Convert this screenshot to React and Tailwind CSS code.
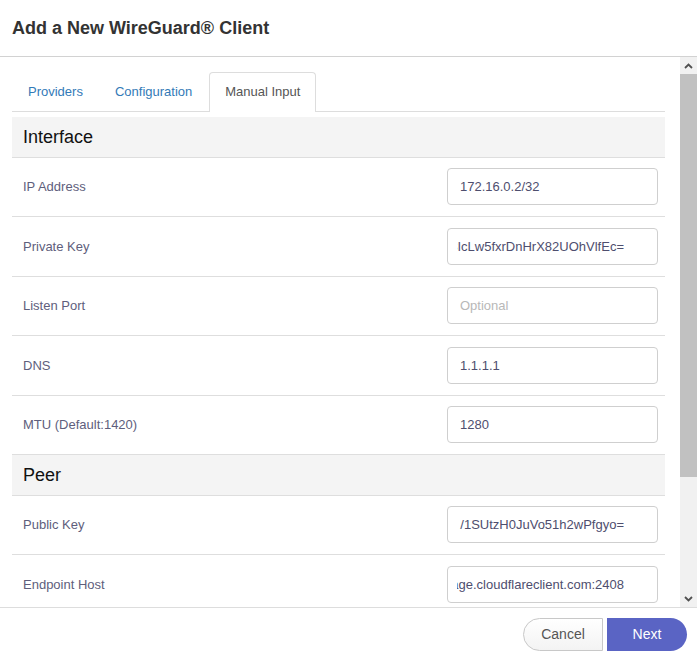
import React from "react";

const interfaceRows = [
  { label: "IP Address", value: "172.16.0.2/32" },
  { label: "Private Key", value: "kF2m9qT4vB7xN1pR8sW3IcLw5fxrDnHrX82UOhVlfEc=", tail: true },
  { label: "Listen Port", placeholder: "Optional" },
  { label: "DNS", value: "1.1.1.1" },
  { label: "MTU (Default:1420)", value: "1280" },
];

const peerRows = [
  { label: "Public Key", value: "/1SUtzH0JuVo51h2wPfgyo=", tail: true },
  { label: "Endpoint Host", value: "engage.cloudflareclient.com:2408", tail: true },
];

function Field({ value, placeholder, tail }) {
  return (
    <div
      className={`w-[211px] h-[37px] mr-[7px] border border-[#cfcfcf] rounded-[4px] bg-white flex items-center pr-[33px] ${
        tail ? "pl-[9px]" : "pl-3"
      }`}
    >
      <div
        className={`flex-1 overflow-hidden whitespace-nowrap flex ${tail ? "justify-end" : "justify-start"} text-[13px] ${
          value ? "text-[#4e4e6e]" : "text-[#b8b8b8]"
        }`}
      >
        <span className="shrink-0">{value || placeholder}</span>
      </div>
    </div>
  );
}

function Row({ label, ...rest }) {
  return (
    <div className="h-[59.5px] border-b border-[#dedede] flex items-center">
      <div className="flex-1 pl-[11px] text-[13px] text-[#5e5e7c]">{label}</div>
      <Field {...rest} />
    </div>
  );
}

function SectionHead({ title }) {
  return (
    <div className="h-[40.5px] bg-[#f4f4f4] border-b border-[#dedede] flex items-center pl-[11px] pt-px text-[18px] text-[#111]">
      {title}
    </div>
  );
}

function Chevron({ up }) {
  return (
    <svg width="9" height="6" viewBox="0 0 9 6" className={up ? "" : "rotate-180"}>
      <path d="M1 5 L4.5 1.5 L8 5" fill="none" stroke="#505050" strokeWidth="1.8" />
    </svg>
  );
}

export default function App() {
  return (
    <div
      className="w-[697px] h-[661px] bg-white flex flex-col overflow-hidden"
      style={{ fontFamily: '"Liberation Sans", Arial, sans-serif' }}
    >
      <div className="h-[57px] shrink-0 border-b border-[#d2d2d2] flex items-center pl-3">
        <h1 className="text-[18px] font-bold text-[#333]">Add a New WireGuard® Client</h1>
      </div>

      <div className="flex-1 flex min-h-0">
        <div className="flex-1 overflow-hidden pt-[15px] pl-3 pr-[15px]">
          <div className="flex items-end h-[40px] border-b border-[#dddddd] pl-px">
            <div className="h-[39px] px-[15px] flex items-center text-[13px] text-[#337ab7]">Providers</div>
            <div className="h-[39px] px-[15px] ml-[2px] flex items-center text-[13px] text-[#337ab7]">Configuration</div>
            <div className="h-[40px] -mb-px px-[15px] ml-[2px] flex items-center text-[13px] text-[#555] bg-white border border-b-0 border-[#dddddd] rounded-t-[4px] pb-px">
              Manual Input
            </div>
          </div>
          <div className="mt-[5px]">
            <SectionHead title="Interface" />
            {interfaceRows.map((r) => (
              <Row key={r.label} {...r} />
            ))}
            <SectionHead title="Peer" />
            {peerRows.map((r) => (
              <Row key={r.label} {...r} />
            ))}
          </div>
        </div>

        <div className="w-[17px] shrink-0 bg-[#f1f1f1] flex flex-col">
          <div className="h-[17px] flex items-center justify-center">
            <Chevron up />
          </div>
          <div className="h-[403px] bg-[#c1c1c1]" />
          <div className="flex-1" />
          <div className="h-[17px] flex items-center justify-center">
            <Chevron />
          </div>
        </div>
      </div>

      <div className="h-[54px] shrink-0 border-t border-[#dddddd] flex items-center justify-end pr-[10px]">
        <button className="h-[33px] w-[80px] rounded-l-full border border-[#c8c8c8] bg-gradient-to-b from-white to-[#f3f3f3] text-[14px] text-[#555] flex items-center justify-center">
          Cancel
        </button>
        <button className="h-[33px] w-[80px] ml-[4px] rounded-r-full rounded-l-[3px] bg-[#5a64c4] text-[14px] text-white flex items-center justify-center">
          Next
        </button>
      </div>
    </div>
  );
}
